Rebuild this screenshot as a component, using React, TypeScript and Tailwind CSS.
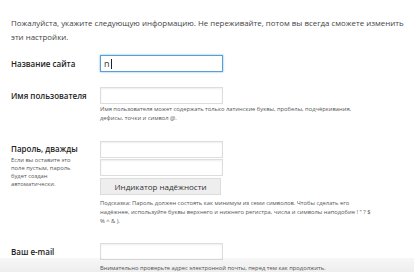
import React from "react";

const field =
  "block h-[17px] w-[123px] border border-[#dddddd] bg-white shadow-[inset_0_1px_2px_rgba(0,0,0,0.07)] outline-none";

export default function App() {
  return (
    <div className="relative h-[272px] w-[414px] overflow-hidden bg-white font-['Open_Sans',sans-serif] text-[#444]">
      <p className="whitespace-nowrap pl-[11px] pt-[16px] text-[7.9px] leading-[14px] text-[#444]">
        Пожалуйста, укажите следующую информацию. Не переживайте, потом вы всегда сможете изменить
        <br />
        эти настройки.
      </p>

      {/* site title */}
      <div className="mt-[11px] flex items-start pl-[11px]">
        <div className="w-[89px] text-[8px] font-semibold leading-[17px] text-[#222]">Название сайта</div>
        <div className="flex h-[17px] w-[123px] items-center border border-[#5b9dd9] bg-white pl-[3px] text-[9px] text-[#333] shadow-[0_0_2px_rgba(30,140,190,0.6)]">
          n<span className="ml-[1px] h-[10px] w-px bg-[#222]" />
        </div>
      </div>

      {/* username */}
      <div className="mt-[15px] flex items-start pl-[11px]">
        <div className="w-[89px] text-[8px] font-semibold leading-[17px] text-[#222]">Имя пользователя</div>
        <div>
          <input className={field} />
          <p className="mt-[1px] text-[5.8px] leading-[9px] text-[#555]">
            Имя пользователя может содержать только латинские буквы, пробелы, подчёркивания,
            <br />
            дефисы, точки и символ @.
          </p>
        </div>
      </div>

      {/* password */}
      <div className="mt-[18px] flex items-start pl-[11px]">
        <div className="w-[89px]">
          <div className="text-[8px] font-semibold leading-[15px] text-[#222]">Пароль, дважды</div>
          <p className="text-[5.8px] leading-[8px] text-[#555]">
            Если вы оставите это
            <br />
            поле пустым, пароль
            <br />
            будет создан
            <br />
            автоматически.
          </p>
        </div>
        <div>
          <input type="password" className={field} />
          <input type="password" className={`${field} mt-[1px]`} />
          <div className="mt-[2px] flex h-[17px] w-[121px] items-center justify-center border border-[#dcdcdc] bg-[#eeeeee] text-[8px] text-[#333]">
            Индикатор надёжности
          </div>
          <p className="mt-[4px] w-[280px] text-[5.8px] leading-[9px] text-[#555]">
            Подсказка: Пароль должен состоять как минимум из семи символов. Чтобы сделать его
            <br />
            надёжнее, используйте буквы верхнего и нижнего регистра, числа и символы наподобие ! " ? $
            <br />% ^ &amp; ).
          </p>
        </div>
      </div>

      {/* email */}
      <div className="mt-[17px] flex items-start pl-[11px]">
        <div className="w-[89px] text-[8px] font-semibold leading-[17px] text-[#222]">Ваш e-mail</div>
        <div>
          <input type="email" className={field} />
          <p className="mt-[4px] text-[5.8px] leading-[9px] text-[#555]">
            Внимательно проверьте адрес электронной почты, перед тем как продолжить.
          </p>
        </div>
      </div>

      <div className="pointer-events-none absolute bottom-0 left-0 h-[14px] w-full bg-gradient-to-b from-black/[0.03] to-black/[0.07]" />
    </div>
  );
}
